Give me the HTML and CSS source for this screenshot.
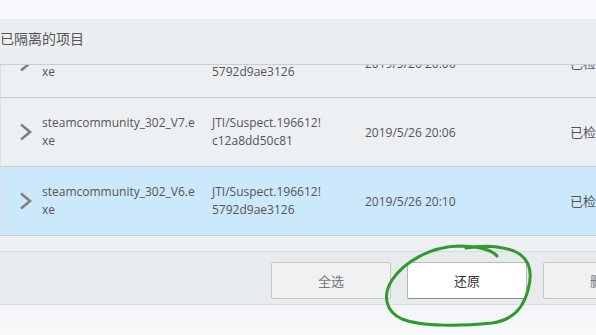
FILE: index.html
```html
<!DOCTYPE html>
<html lang="zh-CN">
<head>
  <meta charset="UTF-8">
  <title>已隔离的项目</title>
  <link rel="stylesheet" href="styles.css">
</head>
<body>

  <div class="topbar"></div>

  <div class="panel">
    <h1 class="title">已隔离的项目</h1>

    <div class="list">
      <div class="rows">
        <div class="row">
          <span class="chev"><svg width="14" height="18" viewBox="0 0 14 18"><path d="M2 1.5 L11 9 L2 16.5" /></svg></span>
          <span class="name">steamcommunity_302_V6.exe</span>
          <span class="threat">JTI/Suspect.196612!5792d9ae3126</span>
          <span class="date">2019/5/26 20:06</span>
          <span class="status">已检测到威胁</span>
        </div>
        <div class="row">
          <span class="chev"><svg width="14" height="18" viewBox="0 0 14 18"><path d="M2 1.5 L11 9 L2 16.5" /></svg></span>
          <span class="name">steamcommunity_302_V7.exe</span>
          <span class="threat">JTI/Suspect.196612!c12a8dd50c81</span>
          <span class="date">2019/5/26 20:06</span>
          <span class="status">已检测到威胁</span>
        </div>
        <div class="row selected">
          <span class="chev"><svg width="14" height="18" viewBox="0 0 14 18"><path d="M2 1.5 L11 9 L2 16.5" /></svg></span>
          <span class="name">steamcommunity_302_V6.exe</span>
          <span class="threat">JTI/Suspect.196612!5792d9ae3126</span>
          <span class="date">2019/5/26 20:10</span>
          <span class="status">已检测到威胁</span>
        </div>
      </div>
    </div>

    <div class="spacer"></div>

    <div class="actions">
      <button type="button" class="btn">全选</button>
      <button type="button" class="btn primary">还原</button>
      <button type="button" class="btn">删除</button>
    </div>
  </div>

  <div class="footer"></div>

  <!-- hand-drawn mark around the restore button -->
  <svg class="mark" width="596" height="335" viewBox="0 0 596 335">
    <path d="M497 256 C492 250 478 246 458 246 C430 247 404 262 392 280 C382 296 386 312 402 319 C422 327 462 326 492 323 C514 320 524 306 528 290 C533 272 530 258 514 251 C500 246 482 245 466 248" />
  </svg>

</body>
</html>
```

FILE: styles.css
```css
body {
  margin: 0;
  width: 596px;
  height: 335px;
  overflow: hidden;
  font-family: "Open Sans", "Noto Sans CJK SC", sans-serif;
  color: #555;
  background-color: #f9fafc;
  position: relative;
}

.topbar {
  height: 19px;
  background-color: #f9fafd;
}

.panel {
  background-color: #eceff2;
}

.title {
  margin: 0;
  height: 45px;
  padding-top: 9px;
  box-sizing: border-box;
  font-family: "Noto Sans CJK SC", sans-serif;
  font-size: 14px;
  font-weight: normal;
  line-height: 20px;
  color: #555;
}

.list {
  height: 172px;
  overflow: hidden;
  border-top: 1px solid #c9ced4;
  box-sizing: border-box;
}

.rows {
  margin-top: -36px;
}

.row {
  display: flex;
  align-items: center;
  height: 69px;
  box-sizing: border-box;
  overflow: hidden;
  border-bottom: 1px solid #c6cbd0;
  border-left: 1px solid #dde1e5;
  background-color: #edf0f3;
  font-size: 12px;
  line-height: 18px;
  white-space: nowrap;
}

.row > span {
  flex: none;
  box-sizing: border-box;
}

.row.selected {
  background-color: #cce8fb;
}

.chev {
  width: 41px;
  padding-left: 18px;
  display: flex;
}

.chev path {
  fill: none;
  stroke: #808080;
  stroke-width: 2.6;
}

.name {
  width: 170px;
  padding-right: 16px;
  white-space: normal;
  word-break: break-all;
}

.threat {
  width: 153px;
  padding-right: 41px;
  white-space: normal;
  word-break: break-all;
}

.date {
  width: 205px;
  padding-top: 1px;
}

.status {
  font-family: "Noto Sans CJK SC", sans-serif;
  font-size: 13px;
}

.spacer {
  height: 15px;
  background-color: #eef1f4;
  border-bottom: 1px solid #d4dbe3;
}

.actions {
  display: flex;
  gap: 16px;
  height: 53px;
  padding: 10px 0 0 271px;
  box-sizing: border-box;
  background-color: #e8ebee;
  border-bottom: 1px solid #d6dde4;
  overflow: hidden;
}

.btn {
  flex: none;
  width: 120px;
  height: 37px;
  padding: 0;
  font-family: "Noto Sans CJK SC", sans-serif;
  font-size: 13px;
  color: #777;
  background-color: #eff1f3;
  border: 1px solid #c4c7cb;
  border-radius: 2px;
}

.btn.primary {
  color: #333;
  background-color: #fff;
  border-color: #b4b6b8;
  border-bottom-color: #8c8c8c;
}

.footer {
  height: 40px;
  background: linear-gradient(#f2f4f7, #f9fafc);
}

.mark {
  position: absolute;
  top: 0;
  left: 0;
  pointer-events: none;
}

.mark path {
  fill: none;
  stroke: #2f9b2b;
  stroke-width: 3;
  stroke-linecap: round;
  stroke-linejoin: round;
}
```
